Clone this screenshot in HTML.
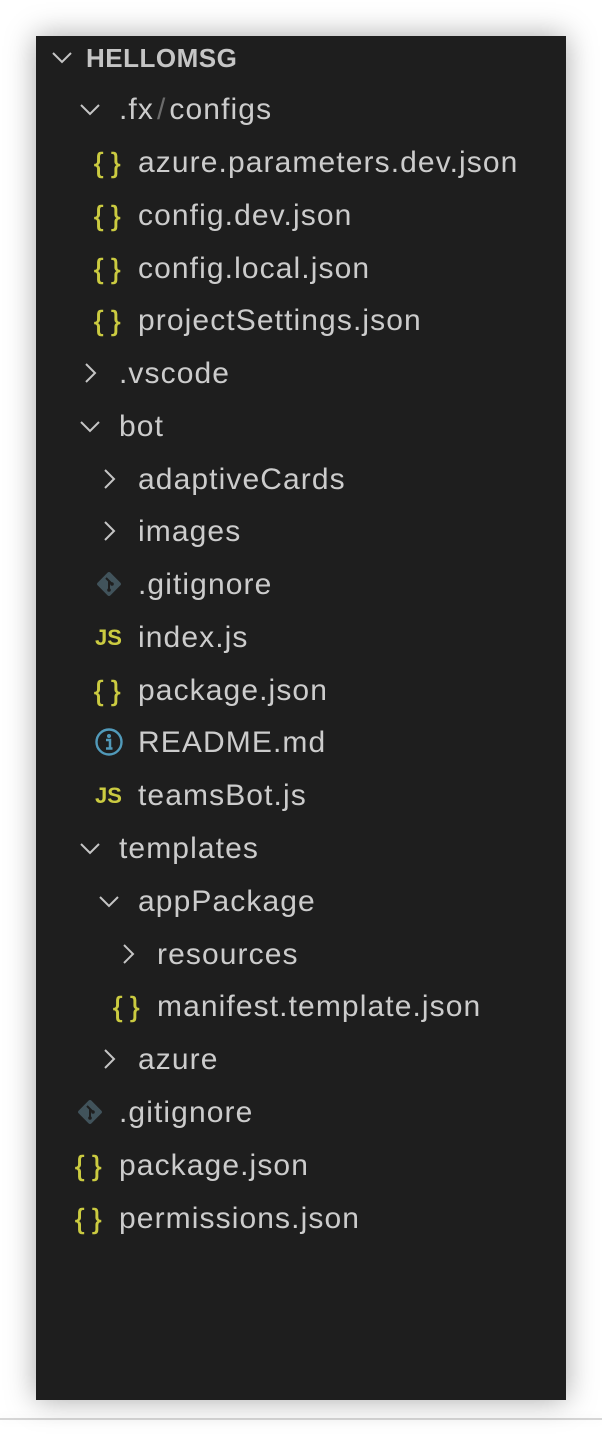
<!DOCTYPE html>
<html><head><meta charset="utf-8"><style>
html,body{margin:0;padding:0;background:#fff;width:602px;height:1436px;overflow:hidden;position:relative;font-family:"Liberation Sans",Helvetica,Arial,sans-serif}
.line{position:absolute;left:0;top:1418px;width:602px;height:2px;background:#d6d6d6;box-shadow:0 0 10px rgba(0,0,0,.08)}
.panel{position:absolute;left:36px;top:36px;width:530px;height:1364px;background:#1e1e1e;box-shadow:0 0 28px rgba(0,0,0,.35)}
.r{position:absolute;height:40px;line-height:42px;color:#cccccc;font-size:30px;letter-spacing:1.1px;white-space:nowrap}
.t{position:absolute;top:0}
.chev{position:absolute;top:10px;width:22px;height:20px}
.ic{position:absolute;top:0;height:40px;line-height:42px}
.br{color:#cbcb41;font-size:28px;letter-spacing:0;word-spacing:0;-webkit-text-stroke:0.6px #cbcb41}
.js{color:#cbcb41;font-size:22px;font-weight:bold;letter-spacing:0}
</style></head><body>
<div class="line"></div>
<div class="panel"></div>
<svg width="0" height="0" style="position:absolute"><defs>
<symbol id="down" viewBox="0 0 22 20"><path d="M2 6 L11 15 L20 6" fill="none" stroke="#c5c5c5" stroke-width="2"/></symbol>
<symbol id="right" viewBox="0 0 22 20"><path d="M7 1 L16 10 L7 19" fill="none" stroke="#c5c5c5" stroke-width="2"/></symbol>
<symbol id="git" viewBox="0 0 30 30"><rect x="6" y="6" width="18" height="18" transform="rotate(45 15 15)" fill="#41535b" rx="2"/><path d="M12 9 L18 15 M15 12 L15 21" stroke="#1e1e1e" stroke-width="2"/><circle cx="15" cy="21" r="1.8" fill="#1e1e1e"/><circle cx="18" cy="15" r="1.8" fill="#1e1e1e"/></symbol>
<symbol id="info" viewBox="0 0 30 30"><circle cx="15" cy="15" r="12.5" fill="none" stroke="#519aba" stroke-width="2.4"/><circle cx="15" cy="9" r="2" fill="#519aba"/><path d="M12 13 H16 V21 M12 21.5 H18.5" stroke="#519aba" stroke-width="2.5" fill="none"/></symbol>
</defs></svg>

<div class="r" style="top:37px;left:0;width:602px"><svg class="chev" style="left:51px"><use href="#down"/></svg><span class="t" style="left:86px;font-weight:bold;font-size:26px;letter-spacing:0.5px;color:#c5c5c5">HELLOMSG</span></div>

<div class="r" style="top:89px;left:0"><svg class="chev" style="left:79px"><use href="#down"/></svg><span class="t" style="left:119px">.fx<span style="color:#6b6b6b;margin:0 3px">/</span>configs</span></div>
<div class="r" style="top:142px;left:0"><span class="ic br" style="left:94px">{ }</span><span class="t" style="left:138px">azure.parameters.dev.json</span></div>
<div class="r" style="top:195px;left:0"><span class="ic br" style="left:94px">{ }</span><span class="t" style="left:138px">config.dev.json</span></div>
<div class="r" style="top:248px;left:0"><span class="ic br" style="left:94px">{ }</span><span class="t" style="left:138px">config.local.json</span></div>
<div class="r" style="top:300px;left:0"><span class="ic br" style="left:94px">{ }</span><span class="t" style="left:138px">projectSettings.json</span></div>
<div class="r" style="top:353px;left:0"><svg class="chev" style="left:79px"><use href="#right"/></svg><span class="t" style="left:119px">.vscode</span></div>
<div class="r" style="top:406px;left:0"><svg class="chev" style="left:79px"><use href="#down"/></svg><span class="t" style="left:119px">bot</span></div>
<div class="r" style="top:459px;left:0"><svg class="chev" style="left:98px"><use href="#right"/></svg><span class="t" style="left:138px">adaptiveCards</span></div>
<div class="r" style="top:511px;left:0"><svg class="chev" style="left:98px"><use href="#right"/></svg><span class="t" style="left:138px">images</span></div>
<div class="r" style="top:564px;left:0"><svg style="position:absolute;left:94px;top:5px" width="30" height="30"><use href="#git"/></svg><span class="t" style="left:138px">.gitignore</span></div>
<div class="r" style="top:617px;left:0"><span class="ic js" style="left:95px">JS</span><span class="t" style="left:138px">index.js</span></div>
<div class="r" style="top:670px;left:0"><span class="ic br" style="left:94px">{ }</span><span class="t" style="left:138px">package.json</span></div>
<div class="r" style="top:722px;left:0"><svg style="position:absolute;left:94px;top:5px" width="30" height="30"><use href="#info"/></svg><span class="t" style="left:138px">README.md</span></div>
<div class="r" style="top:775px;left:0"><span class="ic js" style="left:95px">JS</span><span class="t" style="left:138px">teamsBot.js</span></div>
<div class="r" style="top:828px;left:0"><svg class="chev" style="left:79px"><use href="#down"/></svg><span class="t" style="left:119px">templates</span></div>
<div class="r" style="top:881px;left:0"><svg class="chev" style="left:98px"><use href="#down"/></svg><span class="t" style="left:138px">appPackage</span></div>
<div class="r" style="top:934px;left:0"><svg class="chev" style="left:117px"><use href="#right"/></svg><span class="t" style="left:157px">resources</span></div>
<div class="r" style="top:986px;left:0"><span class="ic br" style="left:113px">{ }</span><span class="t" style="left:157px">manifest.template.json</span></div>
<div class="r" style="top:1039px;left:0"><svg class="chev" style="left:98px"><use href="#right"/></svg><span class="t" style="left:138px">azure</span></div>
<div class="r" style="top:1092px;left:0"><svg style="position:absolute;left:75px;top:5px" width="30" height="30"><use href="#git"/></svg><span class="t" style="left:119px">.gitignore</span></div>
<div class="r" style="top:1145px;left:0"><span class="ic br" style="left:75px">{ }</span><span class="t" style="left:119px">package.json</span></div>
<div class="r" style="top:1198px;left:0"><span class="ic br" style="left:75px">{ }</span><span class="t" style="left:119px">permissions.json</span></div>
</body></html>
